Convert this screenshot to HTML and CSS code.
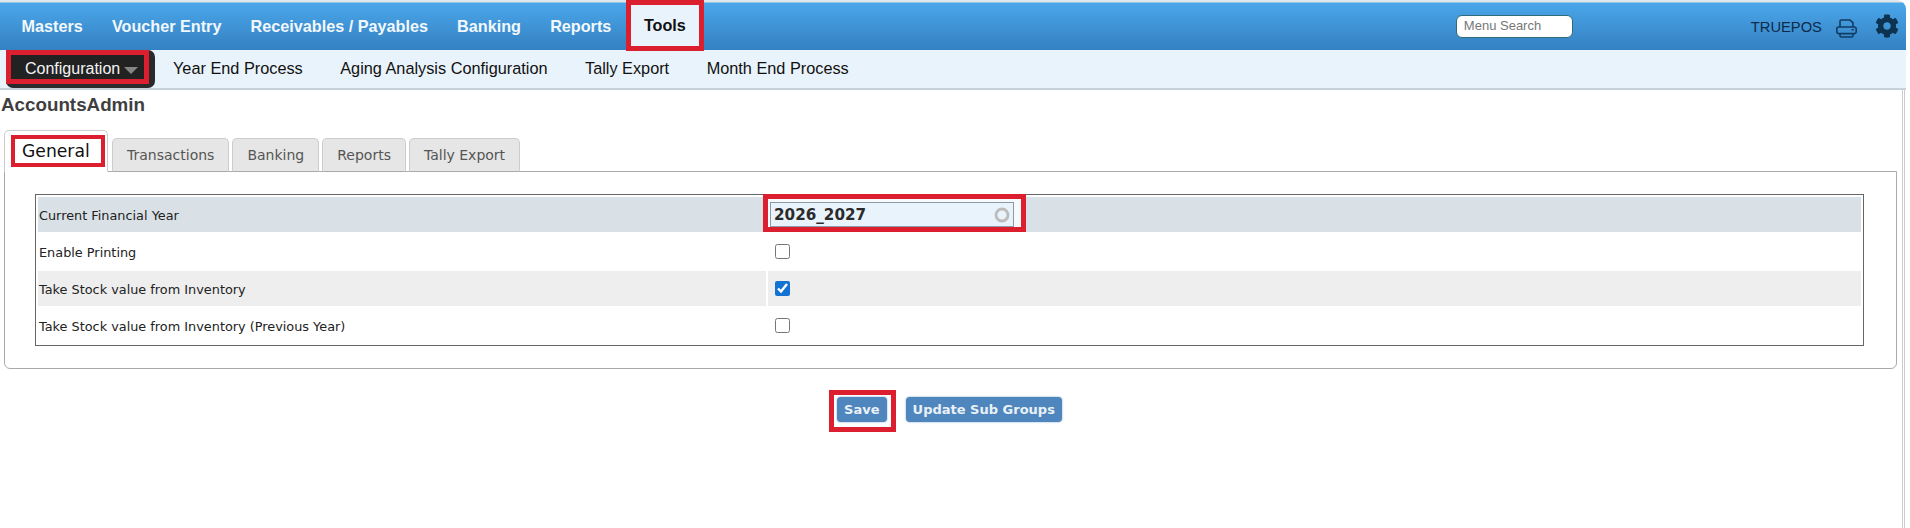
FILE: index.html
```html
<!DOCTYPE html>
<html lang="en">
<head>
<meta charset="utf-8">
<title>AccountsAdmin</title>
<link rel="stylesheet" href="styles.css">
</head>
<body>
<header class="topbar">
  <nav class="mainnav">
    <a class="mainlink">Masters</a>
    <a class="mainlink">Voucher Entry</a>
    <a class="mainlink">Receivables / Payables</a>
    <a class="mainlink">Banking</a>
    <a class="mainlink">Reports</a>
    <a class="mainlink active">Tools</a>
  </nav>
  <input class="menusearch" type="text" placeholder="Menu Search">
  <span class="company">TRUEPOS</span>
  <svg class="printicon" viewBox="0 0 21 19" aria-hidden="true">
    <path d="M4 8V2.2C4 1.5 4.5 1 5.2 1h8.9L17 3.8V8" fill="none" stroke="#0f3d63" stroke-width="1.6"/>
    <rect x="0.8" y="8" width="19.4" height="6.6" rx="2" fill="none" stroke="#0f3d63" stroke-width="1.6"/>
    <path d="M4 14.6v2c0 .8.5 1.4 1.2 1.4h10.6c.7 0 1.2-.6 1.2-1.4v-2" fill="none" stroke="#0f3d63" stroke-width="1.6"/>
    <rect x="15.5" y="10" width="2.4" height="1.4" fill="#0f3d63"/>
  </svg>
  <svg class="gearicon" viewBox="0 0 512 512" aria-hidden="true">
    <path fill="#0d3350" d="M487.4 315.7l-42.6-24.6c4.3-23.2 4.3-47 0-70.2l42.6-24.6c4.9-2.8 7.1-8.6 5.5-14-11.1-35.6-30-67.8-54.7-94.6-3.8-4.1-10-5.1-14.8-2.3L380.8 110c-17.9-15.4-38.5-27.3-60.8-35.1V25.8c0-5.6-3.9-10.5-9.4-11.7-36.7-8.2-74.3-7.8-109.2 0-5.5 1.2-9.4 6.1-9.4 11.7V75c-22.2 7.9-42.8 19.8-60.8 35.1L88.7 85.5c-4.9-2.8-11-1.9-14.8 2.3-24.7 26.7-43.6 58.9-54.7 94.6-1.7 5.4.6 11.2 5.5 14L67.3 221c-4.3 23.2-4.3 47 0 70.2l-42.6 24.6c-4.9 2.8-7.1 8.6-5.5 14 11.1 35.6 30 67.8 54.7 94.6 3.8 4.1 10 5.1 14.8 2.3l42.6-24.6c17.9 15.4 38.5 27.3 60.8 35.1v49.2c0 5.6 3.9 10.5 9.4 11.7 36.7 8.2 74.3 7.8 109.2 0 5.5-1.2 9.4-6.1 9.4-11.7v-49.2c22.2-7.9 42.8-19.8 60.8-35.1l42.6 24.6c4.9 2.8 11 1.9 14.8-2.3 24.7-26.7 43.6-58.9 54.7-94.6 1.5-5.5-.7-11.3-5.6-14.1zM256 336c-44.1 0-80-35.9-80-80s35.9-80 80-80 80 35.9 80 80-35.9 80-80 80z"/>
  </svg>
</header>
<nav class="subnav">
  <div class="configbtn">
    <div class="configbox">Configuration<span class="caret"></span></div>
  </div>
  <a class="sublink">Year End Process</a>
  <a class="sublink">Aging Analysis Configuration</a>
  <a class="sublink">Tally Export</a>
  <a class="sublink">Month End Process</a>
</nav>
<main class="content">
  <h1 class="title">AccountsAdmin</h1>
  <div class="tabs">
    <div class="tab current"><span class="tabmark">General</span></div>
    <div class="tab">Transactions</div>
    <div class="tab">Banking</div>
    <div class="tab">Reports</div>
    <div class="tab">Tally Export</div>
  </div>
  <section class="panel">
    <table class="settings">
      <tr class="rowblue">
        <td class="labelcell">Current Financial Year</td>
        <td class="valuecell">
          <div class="selectmark">
            <div class="selectfield">
              <span>2026_2027</span>
              <svg class="spinner" viewBox="0 0 16 16" aria-hidden="true"><circle cx="8" cy="8" r="6" fill="none" stroke="#bcbcbc" stroke-width="2.8"/></svg>
            </div>
          </div>
        </td>
      </tr>
      <tr>
        <td class="labelcell">Enable Printing</td>
        <td class="valuecell"><input class="check" type="checkbox"></td>
      </tr>
      <tr class="rowgrey">
        <td class="labelcell">Take Stock value from Inventory</td>
        <td class="valuecell"><input class="check" type="checkbox" checked></td>
      </tr>
      <tr>
        <td class="labelcell">Take Stock value from Inventory (Previous Year)</td>
        <td class="valuecell"><input class="check" type="checkbox"></td>
      </tr>
    </table>
  </section>
  <div class="actions">
    <div class="savemark"><button class="btn" type="button">Save</button></div>
    <button class="btn" type="button">Update Sub Groups</button>
  </div>
</main>
</body>
</html>
```
FILE: styles.css
```css
* { box-sizing: border-box; }
html, body { margin: 0; padding: 0; background: #fff; }
body { height: 528px; overflow: hidden; font-family: "Liberation Sans", Arial, sans-serif; }

.topbar {
  display: flex;
  align-items: center;
  width: 1906px;
  height: 50px;
  background: linear-gradient(#dfe6ea 0, #dfe6ea 2px, #4aa6ea 3px, #3481c1 100%);
  border-top-right-radius: 9px;
}
.mainnav { display: flex; align-self: stretch; padding-left: 7px; }
.mainlink {
  display: flex;
  align-items: center;
  padding: 3px 14.6px 0;
  font-size: 16.2px;
  font-weight: 700;
  color: #f2f8fc;
}
.mainlink.active {
  height: 51px;
  padding: 0 13px;
  border: 5px solid #dc1f2e;
  background: #e9f3fb;
  color: #111;
}
.menusearch {
  width: 117px;
  height: 23px;
  margin: 3px 0 0 752px;
  padding: 0 7px 3px;
  border: 1px solid #2f6b78;
  border-radius: 6px;
  background: #fff;
  font: 13px "Liberation Sans", Arial, sans-serif;
}
.menusearch::placeholder { color: #777; opacity: 1; }
.company { margin: 3px 0 0 178px; font-size: 14.7px; color: #0f2a47; }
.printicon { width: 21px; height: 19px; margin: 6px 0 0 14px; }
.gearicon { width: 24px; height: 24px; margin: 2px 0 0 18px; }

.subnav {
  display: flex;
  align-items: flex-start;
  width: 1906px;
  height: 40px;
  padding-left: 6px;
  background: #e9f3fb;
  border-bottom: 2px solid #c6d1dc;
}
.configbtn {
  width: 149px;
  height: 38px;
  background: #2a2a2c;
  border-radius: 0 7px 7px 7px;
}
.configbox {
  display: flex;
  align-items: center;
  width: 143px;
  height: 34px;
  padding: 3px 0 0 14px;
  border: 5px solid #dc1f2e;
  background: #222;
  font-size: 16px;
  color: #f4f4f4;
}
.caret {
  width: 0;
  height: 0;
  margin: 3px 0 0 4px;
  border-style: solid;
  border-width: 7px 7px 0;
  border-color: #858585 transparent transparent;
}
.sublink { margin: 8px 0 0 37.5px; font-size: 16.3px; line-height: 20px; color: #111; }
.configbtn + .sublink { margin-left: 18px; }

.content {
  width: 1905px;
  height: 438px;
  border-right: 3px double #ccc;
}
.title {
  margin: 0;
  padding: 3px 0 0 1px;
  font-size: 18.8px;
  line-height: 24px;
  font-weight: 700;
  color: #3f3f3f;
}
.tabs {
  display: flex;
  align-items: flex-end;
  height: 55px;
  margin-bottom: -1px;
  padding-left: 4px;
  gap: 3px;
  font-family: "DejaVu Sans", Verdana, sans-serif;
}
.tab {
  height: 34px;
  padding: 8px 14px 0;
  border: 1px solid #ccc;
  border-bottom-color: #aaa;
  border-radius: 5px 5px 0 0;
  background: #e6e6e6;
  font-size: 14px;
  color: #555;
}
.tab.current {
  height: 42px;
  width: 104px;
  margin-right: 1px;
  padding: 4px 2px 0 6px;
  background: #fff;
  border-bottom-color: #fff;
  position: relative;
}
.tabmark {
  display: block;
  height: 32px;
  padding: 2px 0 0 7px;
  border: 4px solid #dc1f2e;
  font-size: 17.2px;
  line-height: 21px;
  color: #111;
  white-space: nowrap;
  overflow: hidden;
}
.panel {
  width: 1893px;
  height: 198px;
  margin-left: 4px;
  padding: 22px 0 0 30px;
  border: 1px solid #aaa;
  border-radius: 0 0 6px 6px;
}
.settings {
  width: 1829px;
  table-layout: fixed;
  border: 1px solid #666;
  border-spacing: 2px;
  border-collapse: separate;
  font-family: "DejaVu Sans", Verdana, sans-serif;
  font-size: 12.85px;
  color: #222;
}
.settings td { height: 35px; padding: 0; vertical-align: middle; }
.labelcell { width: 728px; padding: 1px 0 0 1px !important; }
.rowblue td { background: #d9e1e6; }
.rowgrey td { background: #eee; }
.valuecell { padding-left: 7px !important; }
.rowblue .valuecell { padding-left: 0 !important; }
.selectmark {
  width: 263px;
  height: 38px;
  margin: -3px 0 0 -5px;
  padding: 3px 7px 0 2px;
  border: 5px solid #dc1f2e;
  background: #f7fafc;
}
.selectfield {
  display: flex;
  align-items: center;
  justify-content: space-between;
  height: 25px;
  padding: 0 3px 0 3px;
  border: 1px solid #8b9aa6;
  background: #e9f3fb;
  font-size: 15.2px;
  font-weight: 700;
  color: #2b2b2b;
}
.spinner { width: 16px; height: 16px; }
.check {
  display: block;
  width: 15px;
  height: 15px;
  margin: 0;
  accent-color: #1273d2;
}
.actions {
  display: flex;
  justify-content: center;
  gap: 10px;
  margin-top: 21px;
  padding-right: 11.5px;
}
.savemark {
  height: 42px;
  padding: 2px 4px 0 3px;
  border: 5px solid #dc1f2e;
}
.btn {
  width: 156px;
  height: 25px;
  margin-top: 7px;
  padding: 0;
  border: 0;
  border-radius: 4px;
  background: #4f86bd;
  box-shadow: 0 0 2px #6f9ccb;
  font-family: "DejaVu Sans", Verdana, sans-serif;
  font-size: 13px;
  font-weight: 700;
  color: #e9f1f6;
}
.savemark .btn { width: 50px; margin-top: 0; }
```
